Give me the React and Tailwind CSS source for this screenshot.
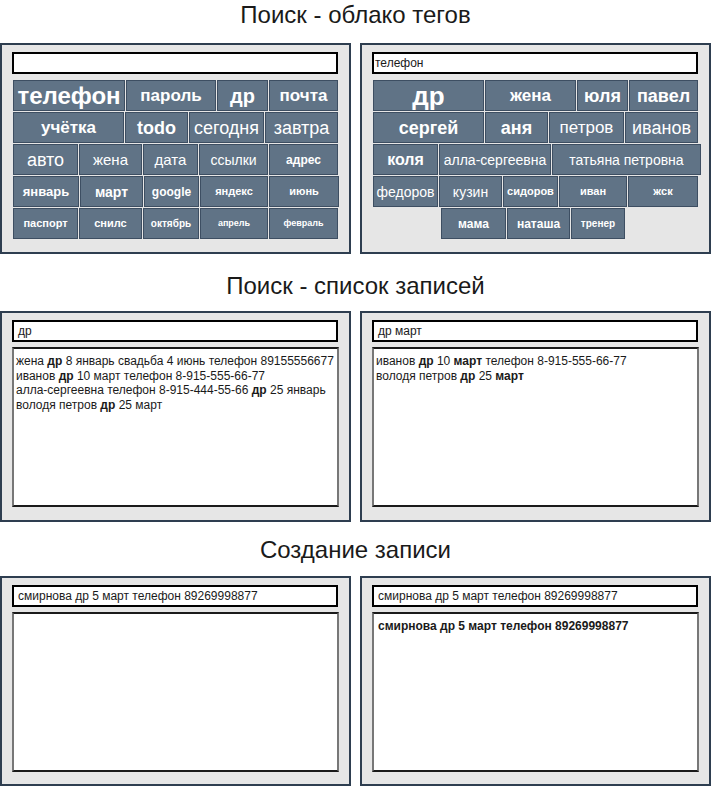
import React from "react";

const TAG = "flex h-[31px] shrink-0 items-center justify-center whitespace-nowrap border border-[#3d4e62] bg-[#607386] leading-none text-white";

const cloud1 = [
  [
    ["телефон", "w-[112px] text-[24px] font-bold"],
    ["пароль", "w-[90px] text-[17px] font-bold"],
    ["др", "w-[51px] text-[20px] font-bold"],
    ["почта", "w-[69px] text-[17px] font-bold"],
  ],
  [
    ["учётка", "w-[111px] text-[17px] font-bold"],
    ["todo", "w-[63px] text-[18px] font-bold"],
    ["сегодня", "w-[75px] text-[18px]"],
    ["завтра", "w-[73px] text-[18px]"],
  ],
  [
    ["авто", "w-[65px] text-[18px]"],
    ["жена", "w-[63px] text-[15px]"],
    ["дата", "w-[55px] text-[15px]"],
    ["ссылки", "w-[69px] text-[14px]"],
    ["адрес", "w-[69px] text-[12px] font-bold"],
  ],
  [
    ["январь", "w-[66px] text-[13px] font-bold"],
    ["март", "w-[63px] text-[14px] font-bold"],
    ["google", "w-[55px] text-[12px] font-bold"],
    ["яндекс", "w-[68px] text-[11px] font-bold"],
    ["июнь", "w-[70px] text-[11px] font-bold"],
  ],
  [
    ["паспорт", "w-[65px] text-[11px] font-bold"],
    ["снилс", "w-[63px] text-[11px] font-bold"],
    ["октябрь", "w-[56px] text-[10px] font-bold"],
    ["апрель", "w-[68px] text-[9px] font-bold"],
    ["февраль", "w-[69px] text-[9px] font-bold"],
  ],
];

const cloud2 = [
  [
    ["др", "w-[111px] text-[26px] font-bold"],
    ["жена", "w-[91px] text-[17px] font-bold"],
    ["юля", "w-[51px] text-[18px] font-bold"],
    ["павел", "w-[69px] text-[18px] font-bold"],
  ],
  [
    ["сергей", "w-[111px] text-[18px] font-bold"],
    ["аня", "w-[63px] text-[18px] font-bold"],
    ["петров", "w-[75px] text-[17px]"],
    ["иванов", "w-[73px] text-[18px]"],
  ],
  [
    ["коля", "w-[65px] text-[16px] font-bold"],
    ["алла-сергеевна", "w-[112px] text-[14px]"],
    ["татьяна петровна", "w-[149px] text-[14px]"],
  ],
  [
    ["федоров", "w-[65px] text-[14px]"],
    ["кузин", "w-[63px] text-[14px]"],
    ["сидоров", "w-[55px] text-[11px] font-bold"],
    ["иван", "w-[68px] text-[11px] font-bold"],
    ["жск", "w-[70px] text-[11px] font-bold"],
  ],
  [
    ["мама", "w-[65px] text-[12px] font-bold"],
    ["наташа", "w-[63px] text-[12px] font-bold"],
    ["тренер", "w-[54px] text-[10px] font-bold"],
  ],
];

function Cloud({ rows, lastOffset }) {
  return (
    <div className="ml-[1px] mt-[6px] flex flex-col gap-[1px]">
      {rows.map((row, i) => (
        <div
          key={i}
          className={
            i === rows.length - 1 && lastOffset
              ? "ml-[68px] flex gap-[1px]"
              : "flex gap-[1px]"
          }
        >
          {row.map(([t, c]) => (
            <div key={t} className={TAG + " " + c}>
              {t}
            </div>
          ))}
        </div>
      ))}
    </div>
  );
}

function Panel({ children, h = "h-[211px]" }) {
  return (
    <div className={"box-border flex flex-col border-2 border-[#2e3e50] bg-[#e6e6e6] pl-[10px] pr-[11px] pt-[7px] " + h}>
      {children}
    </div>
  );
}

function Field({ text, pad = "pl-[4px]" }) {
  return (
    <div className={"box-border flex h-[22px] w-[326px] items-center border-2 border-black bg-white text-[12px] leading-none text-[#1a1a1a] " + pad}>
      {text}
    </div>
  );
}

function Box({ children }) {
  return (
    <div className="mt-[5px] box-border h-[160px] w-[327px] border-2 border-x-[#777777] border-y-[#1a1a1a] bg-white px-[2px] pt-[5px] text-[12px] leading-[14.5px] text-[#1a1a1a]">
      {children}
    </div>
  );
}

function Title({ children, cls }) {
  return (
    <div className={"h-[30px] text-center text-[24px] leading-[30px] text-[#1a1a1a] " + cls}>
      {children}
    </div>
  );
}

export default function App() {
  return (
    <div className="w-[711px] bg-white font-['Liberation_Sans',Arial,sans-serif]">
      <Title cls="mb-[13px]">Поиск - облако тегов</Title>
      <div className="grid grid-cols-[351px_351px] gap-x-[9px]">
        <Panel>
          <Field text="" />
          <Cloud rows={cloud1} />
        </Panel>
        <Panel>
          <Field text="телефон" pad="pl-[1px]" />
          <Cloud rows={cloud2} lastOffset />
        </Panel>
      </div>

      <Title cls="mt-[17px] mb-[10px]">Поиск - список записей</Title>
      <div className="grid grid-cols-[351px_351px] gap-x-[9px]">
        <Panel>
          <Field text="др" />
          <Box>
            <div>
              жена <b>др</b> 8 январь свадьба 4 июнь телефон 89155556677
            </div>
            <div>
              иванов <b>др</b> 10 март телефон 8-915-555-66-77
            </div>
            <div>
              алла-сергеевна телефон 8-915-444-55-66 <b>др</b> 25 январь
            </div>
            <div>
              володя петров <b>др</b> 25 март
            </div>
          </Box>
        </Panel>
        <Panel>
          <Field text="др март" />
          <Box>
            <div>
              иванов <b>др</b> 10 <b>март</b> телефон 8-915-555-66-77
            </div>
            <div>
              володя петров <b>др</b> 25 <b>март</b>
            </div>
          </Box>
        </Panel>
      </div>

      <Title cls="mt-[13px] mb-[11px]">Создание записи</Title>
      <div className="grid grid-cols-[351px_351px] gap-x-[9px]">
        <Panel h="h-[210px]">
          <Field text="смирнова др 5 март телефон 89269998877" pad="pl-[4px]" />
          <Box />
        </Panel>
        <Panel h="h-[210px]">
          <Field text="смирнова др 5 март телефон 89269998877" pad="pl-[4px]" />
          <Box>
            <div className="pl-[2px] font-bold">
              смирнова др 5 март телефон 89269998877
            </div>
          </Box>
        </Panel>
      </div>
    </div>
  );
}
